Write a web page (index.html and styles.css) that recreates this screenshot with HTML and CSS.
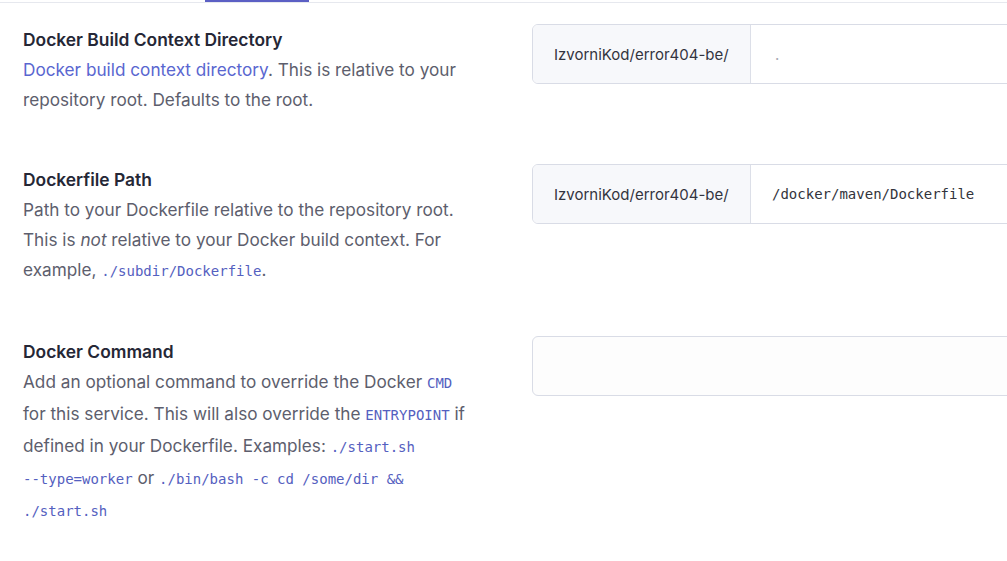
FILE: index.html
```html
<!DOCTYPE html>
<html>
<head>
<meta charset="utf-8">
<link rel="stylesheet" href="styles.css">
</head>
<body>
<div class="tabs"><div class="tab-active"></div></div>
<main class="settings">
  <section class="row">
    <div class="info">
      <h3 class="title">Docker Build Context Directory</h3>
      <p class="desc"><a class="link" href="#">Docker build context directory</a>. This is relative to your repository root. Defaults to the root.</p>
    </div>
    <div class="control">
      <div class="field">
        <span class="prefix">IzvorniKod/error404-be/</span>
        <span class="value placeholder">.</span>
      </div>
    </div>
  </section>
  <section class="row">
    <div class="info">
      <h3 class="title">Dockerfile Path</h3>
      <p class="desc">Path to your Dockerfile relative to the repository root. This is <em>not</em> relative to your Docker build context. For example, <code>./subdir/Dockerfile</code>.</p>
    </div>
    <div class="control">
      <div class="field">
        <span class="prefix">IzvorniKod/error404-be/</span>
        <span class="value mono">/docker/maven/Dockerfile</span>
      </div>
    </div>
  </section>
  <section class="row">
    <div class="info">
      <h3 class="title">Docker Command</h3>
      <p class="desc">Add an optional command to override the Docker <code>CMD</code> for this service. This will also override the <code>ENTRYPOINT</code> if defined in your Dockerfile. Examples: <code><span class="nw">./start.sh</span> <span class="nw">--type=worker</span></code> or <code><span class="nw">./bin/bash</span> <span class="nw">-c</span> <span class="nw">cd</span> <span class="nw">/some/dir</span> <span class="nw">&amp;&amp;</span> <span class="nw">./start.sh</span></code></p>
    </div>
    <div class="control">
      <div class="field empty"></div>
    </div>
  </section>
</main>
</body>
</html>
```
FILE: styles.css
```css
html, body {
  margin: 0;
  padding: 0;
  background: #ffffff;
  overflow: hidden;
}
body {
  font-family: Inter, "Noto Sans", sans-serif;
  width: 1007px;
  height: 561px;
}
.tabs {
  height: 2px;
  border-bottom: 1px solid #e6e8ee;
  display: flex;
}
.tab-active {
  margin-left: 205px;
  width: 104px;
  height: 2px;
  background: #5b5fc4;
}
.settings {
  padding-top: 21px;
  display: flex;
  flex-direction: column;
  gap: 49px;
}
.row {
  display: flex;
  padding-left: 23px;
}
.info {
  width: 450px;
  flex: none;
  padding-top: 1px;
  margin-right: 59px;
}
.title {
  margin: 0;
  font-size: 17.4px;
  font-weight: 600;
  line-height: 30px;
  color: #252736;
}
.desc {
  margin: 0;
  font-size: 17.2px;
  line-height: 30px;
  color: #5d5e6d;
}
.link {
  color: #5966d0;
  text-decoration: none;
}
.desc em {
  font-style: italic;
}
code {
  font-family: "DejaVu Sans Mono", "Liberation Mono", monospace;
  font-size: 14px;
  color: #5460c0;
  line-height: 32px;
}
.nw {
  white-space: nowrap;
}
.control {
  flex: none;
  width: 560px;
}
.field {
  display: flex;
  height: 58px;
  border: 1px solid #d9dce6;
  border-radius: 6px;
  overflow: hidden;
}
.field.empty {
  background: #fdfdfd;
}
.prefix {
  display: flex;
  align-items: center;
  padding: 0 20px 0 21px;
  background: #f7f8fb;
  border-right: 1px solid #dcdfe8;
  font-size: 15px;
  color: #33343f;
  width: 176px;
}
.value {
  display: flex;
  align-items: center;
  padding-left: 21px;
  font-size: 15px;
  color: #2f3038;
}
.value.placeholder {
  color: #a7a8b3;
  padding-left: 24px;
}
.value.mono {
  font-family: "DejaVu Sans Mono", "Liberation Mono", monospace;
  font-size: 14px;
  color: #33343c;
}
```
